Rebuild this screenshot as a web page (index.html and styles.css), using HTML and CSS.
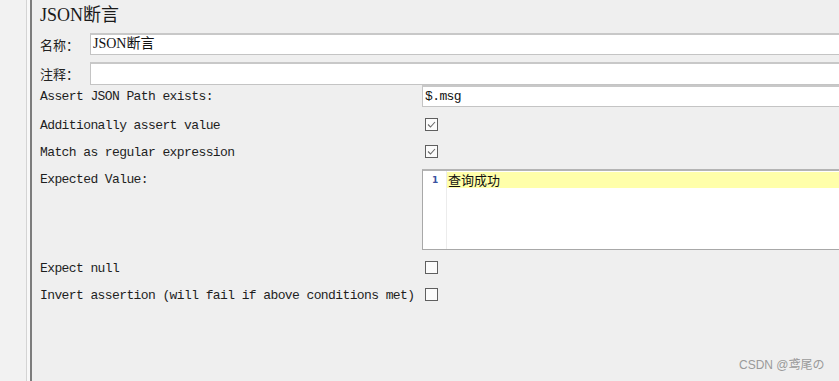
FILE: index.html
```html
<!DOCTYPE html>
<html>
<head>
<meta charset="utf-8">
<link rel="stylesheet" href="styles.css">
</head>
<body>
<div class="app">
  <div class="side"></div>
  <div class="sep"></div>
  <div class="panel">
    <div class="title">JSON断言</div>
    <div class="meta meta-name">
      <span class="meta-label">名称：</span>
      <div class="field field-name">JSON断言</div>
    </div>
    <div class="meta meta-comment">
      <span class="meta-label">注释：</span>
      <div class="field field-comment"></div>
    </div>
    <div class="form">
      <div class="lbl">Assert JSON Path exists:</div>
      <div class="ctl"><div class="field field-path">$.msg</div></div>

      <div class="lbl spaced">Additionally assert value</div>
      <div class="ctl spaced"><span class="cb"><svg viewBox="0 0 13 13" width="13" height="13"><path d="M3 6.5 L5.5 9 L10 4" fill="none" stroke="#6a6a6a" stroke-width="1.1"/></svg></span></div>

      <div class="lbl">Match as regular expression</div>
      <div class="ctl"><span class="cb"><svg viewBox="0 0 13 13" width="13" height="13"><path d="M3 6.5 L5.5 9 L10 4" fill="none" stroke="#6a6a6a" stroke-width="1.1"/></svg></span></div>

      <div class="lbl top">Expected Value:</div>
      <div class="ctl top">
        <div class="editor">
          <div class="gutter"><span class="lineno">1</span></div>
          <div class="code"><div class="line current">查询成功</div></div>
        </div>
      </div>

      <div class="lbl spaced">Expect null</div>
      <div class="ctl spaced"><span class="cb"></span></div>

      <div class="lbl">Invert assertion (will fail if above conditions met)</div>
      <div class="ctl"><span class="cb"></span></div>
    </div>
    <div class="watermark">CSDN @鸢尾の</div>
  </div>
</div>
</body>
</html>
```

FILE: styles.css
```css
html, body {
  margin: 0;
  padding: 0;
  width: 839px;
  height: 381px;
  overflow: hidden;
  background: #f0f0f0;
}
.app {
  display: flex;
  height: 381px;
}
.side {
  width: 26px;
  background: #f2f2f2;
  border-right: 1px solid #d4d4d4;
}
.sep {
  width: 3px;
  background: #f8f8f8;
  border-right: 2px solid #7c7c7c;
}
.panel {
  flex: 1;
  min-width: 0;
  background: #efefef;
  padding-left: 8px;
  overflow: hidden;
  position: relative;
}
.title {
  height: 33px;
  line-height: 30px;
  font-family: "Liberation Serif", "Noto Sans CJK SC", serif;
  font-size: 18px;
  color: #1a1a1a;
}
.meta {
  display: flex;
  align-items: stretch;
}
.meta-name { height: 22px; margin-bottom: 7px; }
.meta-comment { height: 23px; }
.meta-label {
  width: 50px;
  line-height: 23px;
  font-family: "Noto Sans CJK SC", sans-serif;
  font-size: 13px;
  color: #222;
}
.field {
  flex: 1;
  box-sizing: border-box;
  background: #fff;
  border: 1px solid #c4c4c4;
  border-top: 2px solid #c8c8c8;
  border-right: none;
  margin-right: -4px;
  padding-left: 2px;
  line-height: 18px;
  color: #111;
}
.field-name {
  font-family: "Liberation Serif", "Noto Sans CJK SC", serif;
  font-size: 14px;
}
.form {
  display: grid;
  grid-template-columns: 382px 1fr;
  grid-template-rows: 22px 31px 27px 85px 31px 27px;
}
.lbl {
  font-family: "Liberation Mono", monospace;
  font-size: 13px;
  letter-spacing: -0.6px;
  color: #1e1e1e;
  display: flex;
  align-items: center;
  white-space: nowrap;
  padding-top: 1px;
}
.ctl {
  display: flex;
  align-items: center;
  min-width: 0;
}
.lbl.spaced { padding-top: 5px; }
.ctl.spaced { padding-top: 4px; }
.lbl.top { align-items: flex-start; padding-top: 7px; }
.ctl.top { align-items: flex-start; padding-top: 4px; }
.field-path {
  height: 22px;
  font-family: "Liberation Mono", monospace;
  font-size: 13px;
  letter-spacing: -0.6px;
  line-height: 19px;
}
.cb {
  width: 13px;
  height: 13px;
  box-sizing: border-box;
  border: 1px solid #5f5f5f;
  background: #fbfbfb;
  margin-left: 3px;
  position: relative;
}
.cb svg { position: absolute; left: -1px; top: -1px; }
.editor {
  flex: 1;
  height: 81px;
  box-sizing: border-box;
  background: #fff;
  border: 1px solid #a8a8a8;
  border-top: 2px solid #b4b4b4;
  border-right: none;
  margin-right: -4px;
  display: flex;
}
.gutter {
  width: 23px;
  border-right: 1px solid #ececec;
  background: #fff;
  position: relative;
}
.lineno {
  position: absolute;
  left: 9px;
  top: 4px;
  font-family: "DejaVu Sans", sans-serif;
  font-size: 9px;
  font-weight: bold;
  color: #3a52a0;
}
.code {
  flex: 1;
  padding-top: 1px;
}
.line {
  height: 16px;
  line-height: 16px;
  font-family: "Noto Sans CJK SC", sans-serif;
  font-size: 13px;
  color: #111;
  padding-left: 1px;
}
.line.current { background: #ffffaa; }
.watermark {
  position: absolute;
  left: 707px;
  top: 355px;
  font-family: "Liberation Sans", "Noto Sans CJK SC", sans-serif;
  font-size: 12px;
  color: #9a9a9a;
  white-space: nowrap;
}
```
